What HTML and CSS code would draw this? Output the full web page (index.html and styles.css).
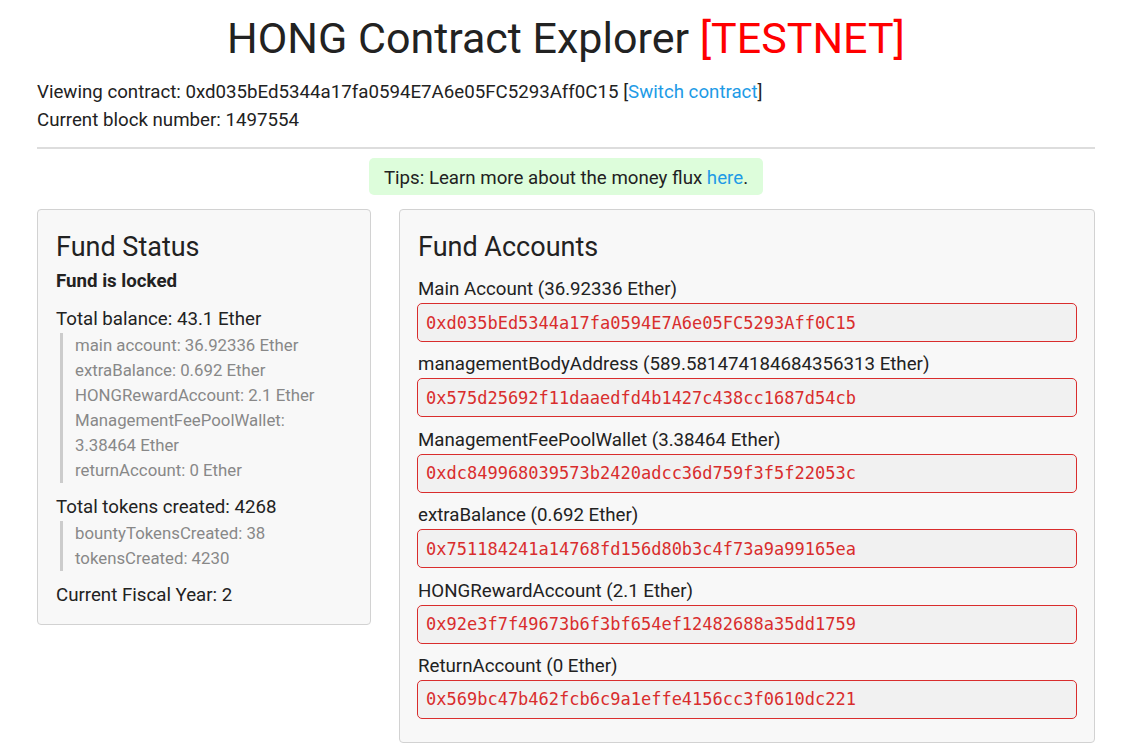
FILE: index.html
```html
<!DOCTYPE html>
<html>
<head>
<meta charset="utf-8">
<title>HONG Contract Explorer</title>
<link rel="stylesheet" href="styles.css">
</head>
<body>
<div class="container">
  <h1 class="title">HONG Contract Explorer <span class="testnet">[TESTNET]</span></h1>
  <p class="meta">Viewing contract: 0xd035bEd5344a17fa0594E7A6e05FC5293Aff0C15 [<a href="#">Switch contract</a>]</p>
  <p class="meta">Current block number: 1497554</p>
  <hr class="rule">
  <div class="tips-row">
    <div class="tips">Tips: Learn more about the money flux <a href="#">here</a>.</div>
  </div>
  <div class="columns">
    <div class="well status">
      <h2 class="well-title">Fund Status</h2>
      <p class="locked">Fund is locked</p>
      <div class="group">
        <div class="line">Total balance: 43.1 Ether</div>
        <div class="quote">
          <div>main account: 36.92336 Ether</div>
          <div>extraBalance: 0.692 Ether</div>
          <div>HONGRewardAccount: 2.1 Ether</div>
          <div>ManagementFeePoolWallet: 3.38464 Ether</div>
          <div>returnAccount: 0 Ether</div>
        </div>
      </div>
      <div class="group">
        <div class="line">Total tokens created: 4268</div>
        <div class="quote">
          <div>bountyTokensCreated: 38</div>
          <div>tokensCreated: 4230</div>
        </div>
      </div>
      <div class="group">
        <div class="line">Current Fiscal Year: 2</div>
      </div>
    </div>
    <div class="well accounts">
      <h2 class="well-title">Fund Accounts</h2>
      <div class="acct">
        <div class="acct-label">Main Account (36.92336 Ether)</div>
        <div class="addr">0xd035bEd5344a17fa0594E7A6e05FC5293Aff0C15</div>
      </div>
      <div class="acct">
        <div class="acct-label">managementBodyAddress (589.581474184684356313 Ether)</div>
        <div class="addr">0x575d25692f11daaedfd4b1427c438cc1687d54cb</div>
      </div>
      <div class="acct">
        <div class="acct-label">ManagementFeePoolWallet (3.38464 Ether)</div>
        <div class="addr">0xdc849968039573b2420adcc36d759f3f5f22053c</div>
      </div>
      <div class="acct">
        <div class="acct-label">extraBalance (0.692 Ether)</div>
        <div class="addr">0x751184241a14768fd156d80b3c4f73a9a99165ea</div>
      </div>
      <div class="acct">
        <div class="acct-label">HONGRewardAccount (2.1 Ether)</div>
        <div class="addr">0x92e3f7f49673b6f3bf654ef12482688a35dd1759</div>
      </div>
      <div class="acct">
        <div class="acct-label">ReturnAccount (0 Ether)</div>
        <div class="addr">0x569bc47b462fcb6c9a1effe4156cc3f0610dc221</div>
      </div>
    </div>
  </div>
</div>
</body>
</html>
```
FILE: styles.css
```css
html, body {
  margin: 0;
  padding: 0;
  background: #fff;
}
body {
  font-family: Roboto, "Liberation Sans", sans-serif;
  color: #222;
  font-size: 18.7px;
}
a {
  color: #1e9be6;
  text-decoration: none;
}
.container {
  width: 1058px;
  margin-left: 37px;
}
.title {
  margin: 12px 0 14px;
  text-align: center;
  font-weight: 400;
  font-size: 43px;
  line-height: 52px;
  color: #222;
}
.testnet {
  color: #ff0000;
}
.meta {
  margin: 0;
  line-height: 28px;
}
.rule {
  border: 0;
  border-top: 2px solid #ddd;
  margin: 13px 0 9px;
}
.tips-row {
  display: flex;
  justify-content: center;
}
.tips {
  background: #ddfddb;
  border-radius: 5px;
  padding: 9px 15px 5px;
  line-height: 23px;
}
.columns {
  display: grid;
  grid-template-columns: 334px 696px;
  column-gap: 28px;
  align-items: start;
  margin-top: 14px;
}
.well {
  background: #f8f8f8;
  border: 1px solid #d2d2d2;
  border-radius: 4px;
  padding: 19px 18px 19px 18px;
}
.well-title {
  margin: 0;
  font-weight: 400;
  font-size: 27px;
  line-height: 36px;
}
.locked {
  margin: 4px 0 13px;
  font-weight: 700;
  line-height: 24px;
}
.group {
  margin-bottom: 11px;
}
.line {
  line-height: 27px;
}
.quote {
  border-left: 3px solid #ccc;
  margin: 0 0 0 4px;
  padding: 0 5px 0 12px;
  color: #888;
  font-size: 16.8px;
  line-height: 25px;
}
.status {
  padding-bottom: 4px;
}
.accounts .well-title {
  margin-bottom: 11px;
}
.acct-label {
  line-height: 27px;
}
.acct {
  margin-bottom: 9.4px;
}
.addr {
  background: #f1f1f1;
  border: 1px solid #d92d2d;
  border-radius: 5px;
  height: 37px;
  margin: 0 -1px;
  display: flex;
  align-items: center;
  padding-left: 8px;
  font-family: "DejaVu Sans Mono", "Liberation Mono", monospace;
  font-size: 17px;
  color: #d92d2d;
}
.accounts {
  padding-bottom: 14px;
}
```
